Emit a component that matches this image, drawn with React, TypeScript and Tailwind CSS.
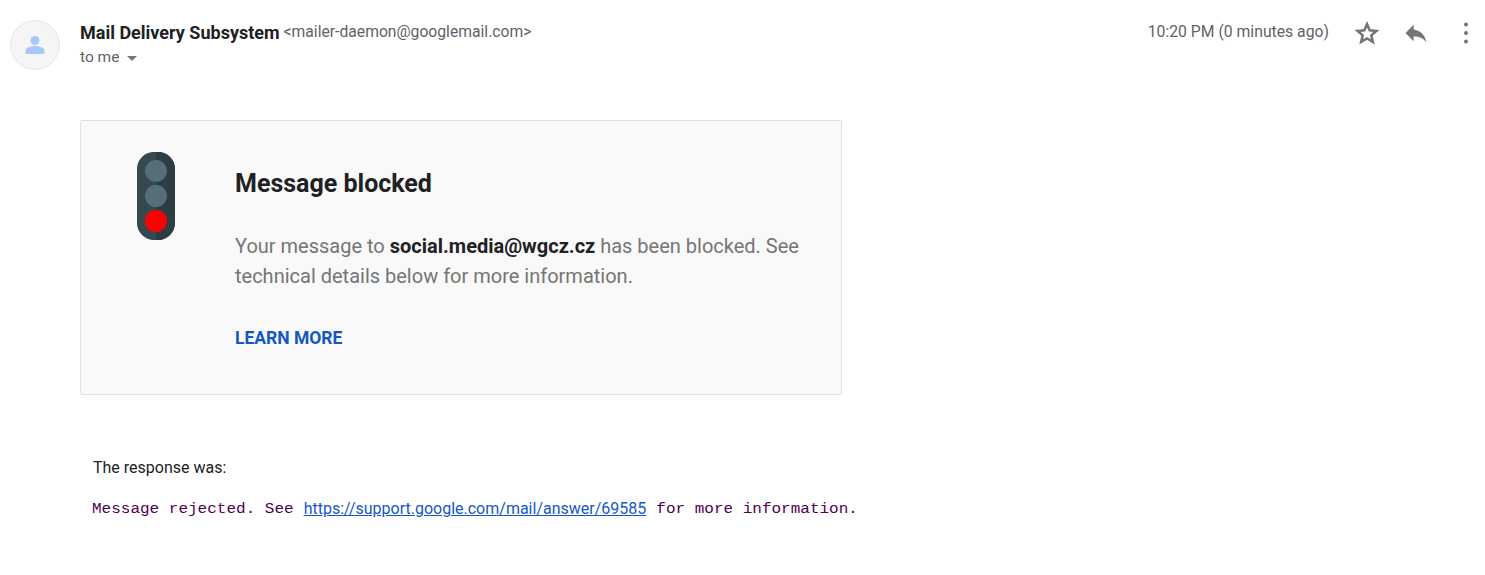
const Avatar = () => (
  <div className="flex h-[50px] w-[50px] shrink-0 items-center justify-center rounded-full border border-[#e8e8e8] bg-[#f5f5f5]">
    <svg width="24" height="24" viewBox="0 0 24 24" fill="#a8c7fa">
      <circle cx="12" cy="7.5" r="4.5" />
      <path d="M2.5 20v-2.5c0-3 6-4.5 9.5-4.5s9.5 1.500 9.500 4.500V20a1 1 0 0 1-1 1H3.500a1 1 0 0 1-1-1z" />
    </svg>
  </div>
)

const TrafficLight = () => (
  <svg width="38" height="88" viewBox="0 0 38 88">
    <rect width="38" height="88" rx="17" fill="#37474f" />
    <path d="M19 0h2a17 17 0 0 1 17 17v54a17 17 0 0 1-17 17h-2z" fill="#2e3c43" />
    <circle cx="19" cy="19" r="11" fill="#546e7a" />
    <circle cx="19" cy="44" r="11" fill="#546e7a" />
    <circle cx="19" cy="69" r="11" fill="#ff0000" />
  </svg>
)

const App = () => {
  return (
    <div className="h-[575px] w-[1485px] overflow-hidden bg-white font-['Roboto',sans-serif]">
      <div className="flex pt-5 pl-[10px] pr-[5px]">
        <Avatar />
        <div className="ml-5 flex-1">
          <div className="flex h-6 items-center">
            <span className="text-[18px] font-bold text-[#202124]">Mail Delivery Subsystem</span>
            <span className="ml-1 text-[15.700px] text-[#5f6368]">&lt;mailer-daemon@googlemail.com&gt;</span>
          </div>
          <div className="mt-1 flex h-5 items-center text-[15.500px] text-[#5f6368]">
            to me
            <span className="ml-2 h-0 w-0 border-x-[5px] border-t-[5px] border-x-transparent border-t-[#777]" />
          </div>
        </div>
        <div className="flex h-6 items-center">
          <span className="text-[15.750px] text-[#5f6368]">10:20 PM (0 minutes ago)</span>
          <svg className="ml-[24px] mt-[2px]" width="28" height="28" viewBox="0 0 24 24" fill="none" stroke="#757575" strokeWidth="2.200">
            <path d="M12 4.400l2.300 5.300 5.700.500-4.300 3.800 1.300 5.600L12 16.700l-5 2.900 1.300-5.600L4 10.200l5.700-.500z" />
          </svg>
          <svg className="ml-[21px] mt-[2px]" width="28" height="28" viewBox="0 0 24 24" fill="#757575">
            <path d="M10 9V5l-7 7 7 7v-4.100c5 0 8.500 1.600 11 5.100-1-5-4-10-11-11z" />
          </svg>
          <svg className="ml-[22px] mt-[2px]" width="28" height="28" viewBox="0 0 24 24" fill="#757575">
            <circle cx="12" cy="4.700" r="1.700" />
            <circle cx="12" cy="12" r="1.700" />
            <circle cx="12" cy="19.300" r="1.700" />
          </svg>
        </div>
      </div>

      <div className="mt-[50px] ml-20 flex h-[275px] w-[762px] rounded-[2px] border border-[#e0e0e0] bg-[#f9f9f9]">
        <div className="ml-[56px] mt-[31px]">
          <TrafficLight />
        </div>
        <div className="ml-[60px] mr-10 flex-1 pt-[47px]">
          <h1 className="text-[25px] leading-[32px] font-bold text-[#202124]">Message blocked</h1>
          <p className="mt-[31px] text-[20px] leading-[30px] text-[#757575]">
            Your message to <b className="font-bold text-[#202124]">social.media@wgcz.cz</b> has been blocked. See technical details below for more information.
          </p>
          <div className="mt-[35px] text-[17.500px] leading-6 font-bold text-[#1558bf]">LEARN MORE</div>
        </div>
      </div>

      <div className="mt-[61px] ml-[93px] text-[16px] leading-6 text-[#222]">The response was:</div>
      <div className="mt-[17px] ml-[92px] flex items-center leading-6">
        <span className="inline-block scale-y-[0.88] font-['Liberation_Mono',monospace] text-[16px] text-[#500050]">Message rejected. See</span>
        <a className="ml-[10px] text-[16px] text-[#1558bf] underline">https://support.google.com/mail/answer/69585</a>
        <span className="ml-[10px] inline-block scale-y-[0.88] font-['Liberation_Mono',monospace] text-[16px] text-[#500050]">for more information.</span>
      </div>
    </div>
  )
}

export default App
